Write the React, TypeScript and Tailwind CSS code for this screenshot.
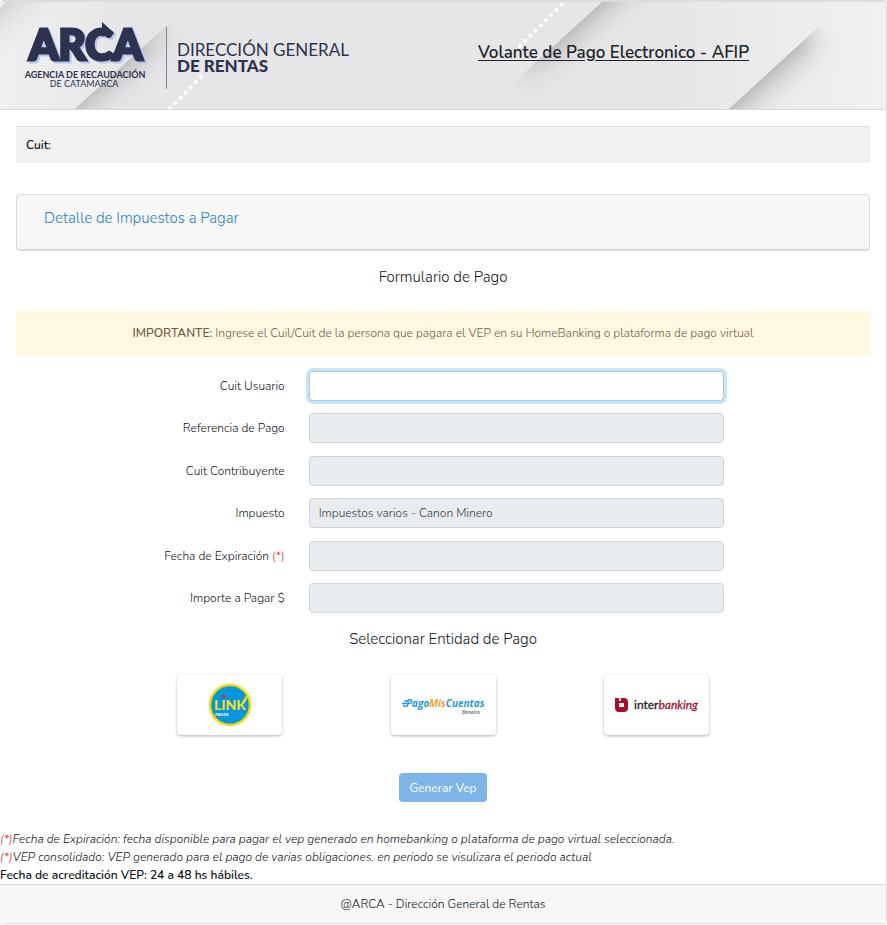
import { FC, ReactNode, useState } from "react";

interface Field {
	id: string;
	label: string;
	value?: string;
	required?: boolean;
	editable?: boolean;
}

const fields: Field[] = [
	{ id: "cuit-usuario", label: "Cuit Usuario", editable: true },
	{ id: "referencia", label: "Referencia de Pago" },
	{ id: "cuit-contribuyente", label: "Cuit Contribuyente" },
	{ id: "impuesto", label: "Impuesto", value: "Impuestos varios - Canon Minero" },
	{ id: "expiracion", label: "Fecha de Expiración", required: true },
	{ id: "importe", label: "Importe a Pagar $" },
];

const HeaderBackground: FC = () => (
	<svg className="absolute inset-0 h-full w-full" viewBox="0 0 886 107" preserveAspectRatio="none" aria-hidden="true">
		<defs>
			<linearGradient id="base" x1="0" x2="1" y1="0" y2="0">
				<stop offset="0" stopColor="#f0f0f0" />
				<stop offset="0.14" stopColor="#e6e6e8" />
				<stop offset="0.75" stopColor="#e6e6e8" />
				<stop offset="1" stopColor="#f1f1f1" />
			</linearGradient>
			<linearGradient id="corner" gradientUnits="userSpaceOnUse" x1="2" y1="0" x2="32" y2="32">
				<stop offset="0" stopColor="#d2d2d2" />
				<stop offset="1" stopColor="#e6e6e8" stopOpacity="0" />
			</linearGradient>
			<linearGradient id="foldLeft" gradientUnits="userSpaceOnUse" x1="118" y1="68" x2="143" y2="96">
				<stop offset="0" stopColor="#c0c0c0" />
				<stop offset="1" stopColor="#e6e6e8" stopOpacity="0" />
			</linearGradient>
			<linearGradient id="foldMiddle" gradientUnits="userSpaceOnUse" x1="567" y1="31" x2="592" y2="59">
				<stop offset="0" stopColor="#bcbcbd" />
				<stop offset="1" stopColor="#e6e6e8" stopOpacity="0" />
			</linearGradient>
			<linearGradient id="foldRight" gradientUnits="userSpaceOnUse" x1="777" y1="63" x2="803" y2="92">
				<stop offset="0" stopColor="#bbbbbc" />
				<stop offset="1" stopColor="#ececec" stopOpacity="0" />
			</linearGradient>
			<linearGradient id="fadeLeft" gradientUnits="userSpaceOnUse" x1="75" y1="107" x2="174" y2="17">
				<stop offset="0.65" stopColor="#fff" />
				<stop offset="1" stopColor="#000" />
			</linearGradient>
			<linearGradient id="fadeMiddle" gradientUnits="userSpaceOnUse" x1="508" y1="86" x2="602" y2="0">
				<stop offset="0" stopColor="#000" />
				<stop offset="0.5" stopColor="#fff" />
			</linearGradient>
			<linearGradient id="fadeRight" gradientUnits="userSpaceOnUse" x1="729" y1="107" x2="827" y2="17">
				<stop offset="0.7" stopColor="#fff" />
				<stop offset="0.95" stopColor="#000" />
			</linearGradient>
			<mask id="maskLeft"><rect x="70" y="0" width="180" height="107" fill="url(#fadeLeft)" /></mask>
			<mask id="maskMiddle"><rect x="500" y="0" width="200" height="107" fill="url(#fadeMiddle)" /></mask>
			<mask id="maskRight"><rect x="720" y="0" width="166" height="107" fill="url(#fadeRight)" /></mask>
		</defs>
		<rect width="886" height="107" fill="url(#base)" />
		<path d="M6 0H66L0 66V6Z" fill="url(#corner)" />
		<path d="M75 107L174 17L240 107Z" fill="url(#foldLeft)" mask="url(#maskLeft)" />
		<path d="M508 86L602 0H690V107H508Z" fill="url(#foldMiddle)" mask="url(#maskMiddle)" />
		<path d="M729 107L827 17L886 107Z" fill="url(#foldRight)" mask="url(#maskRight)" />
		<path d="M170 106L204 72M520 44L562 2" stroke="#fff" strokeWidth="4" strokeLinecap="round" strokeDasharray="0.1 7.2" />
	</svg>
);

const ArcaLogo: FC = () => (
	<svg className="h-[72px] w-[336px] shrink-0 overflow-visible font-normal" viewBox="0 0 336 72" role="img" aria-label="ARCA Dirección General de Rentas">
		<g fill="#2d3250" fontFamily="Lato, sans-serif">
			<g className="drop-shadow-[2px_2px_0_#b7c6ee]">
				<text x="6" y="40" fontSize="42" fontWeight="900" stroke="#2d3250" strokeWidth="3">ARCA</text>
				<path d="M79 2L90 12L79 17Z" />
				<path d="M76 38Q90 40 98 29" fill="none" stroke="#2d3250" strokeWidth="5" />
			</g>
			<text x="62" y="58" fontSize="9" fontWeight="700" textAnchor="middle">AGENCIA DE RECAUDACIÓN</text>
			<text x="61" y="67" fontSize="9" textAnchor="middle">DE CATAMARCA</text>
			<text x="154" y="36" fontSize="17">DIRECCIÓN GENERAL</text>
			<text x="154" y="52" fontSize="17" fontWeight="900">DE RENTAS</text>
		</g>
		<path d="M143.500 7V69" stroke="#82869a" />
	</svg>
);

const LinkLogo: FC = () => (
	<svg className="h-11 w-11" viewBox="0 0 44 44" role="img" aria-label="Link Pagos">
		<circle cx="22" cy="22" r="20" fill="#0795dc" stroke="#f5d90b" strokeWidth="2.500" />
		<path d="M35 20L40 12" stroke="#f5d90b" strokeWidth="2.500" />
		<text x="22" y="27" fill="#f5df20" fontSize="14" fontWeight="900" fontFamily="Lato, sans-serif" textAnchor="middle">LINK</text>
		<circle cx="16" cy="13.500" r="1.700" fill="#dc2440" />
		<text x="7" y="33" fill="#fff" fontSize="4" fontWeight="700" fontFamily="Open Sans, sans-serif">PAGOS</text>
	</svg>
);

const PagoMisCuentasLogo: FC = () => (
	<svg className="h-5 w-[82px] overflow-visible" viewBox="0 0 82 20" role="img" aria-label="Pago Mis Cuentas Banelco">
		<path d="M2 6H6M0 8.500H5M1 11H4" stroke="#229bdd" strokeWidth="1.300" />
		<text x="4" y="12" fontSize="10" fontWeight="700" fontStyle="italic" fontFamily="Open Sans, sans-serif" fill="#229bdd">
			Pago<tspan fill="#f6a12d">Mis</tspan>Cuentas
		</text>
		<text x="60" y="19" fontSize="5" fontWeight="600" fontStyle="italic" fontFamily="Open Sans, sans-serif" fill="#666">Banelco</text>
	</svg>
);

const InterbankingLogo: FC = () => (
	<svg className="h-5 w-[86px] overflow-visible font-normal" viewBox="0 0 86 20" role="img" aria-label="Interbanking">
		<path d="M1 3H5V6H10Q14 6 14 9V13Q14 17 10 17H5Q1 17 1 13Z" fill="#a90d2e" />
		<path d="M7 3H10Q14 3 14 7V10H7Z" fill="#a90d2e" />
		<rect x="5" y="8" width="5" height="4" fill="#fff" />
		<g fontSize="12" fontFamily="Lato, sans-serif" strokeWidth="0.3">
			<text x="20" y="14" fill="#222" stroke="#222">
				inter<tspan fill="#a90d2e" stroke="#a90d2e" fontStyle="italic">banking</tspan>
			</text>
		</g>
	</svg>
);

const entities: { name: string; logo: ReactNode }[] = [
	{ name: "Link Pagos", logo: <LinkLogo /> },
	{ name: "Pago Mis Cuentas", logo: <PagoMisCuentasLogo /> },
	{ name: "Interbanking", logo: <InterbankingLogo /> },
];

const App: FC = () => {
	const [cuit, setCuit] = useState("");

	return (
		<div className="rounded-sm border-t-2 border-r border-b border-[#dcdce0] bg-white font-[Nunito,Lato,sans-serif] text-xs leading-[18px] font-light text-[#111418]">
			<header className="relative flex h-[108px] items-center border-b border-[#d8d8da]">
				<HeaderBackground />
				<div className="relative flex w-1/2 pl-[23px]">
					<ArcaLogo />
				</div>
				<h1 className="relative w-1/2 pr-5 pb-1.5 pl-[35px] text-[17px] font-semibold text-[#212529] underline underline-offset-2">Volante de Pago Electronico - AFIP</h1>
			</header>

			<main className="px-4 pt-4">
				<div className="border-t border-[#dee2e6] bg-[#f1f1f1] px-[10px] py-[9px] font-semibold">Cuit:</div>
				<div className="mt-[31px] h-[57px] rounded-sm border border-b-2 border-[#dadbdc] bg-[#f7f7f7] px-[27px] py-[14px]">
					<a href="#detalle" className="text-[15px] text-[#1f7ed2]">Detalle de Impuestos a Pagar</a>
				</div>
				<h2 className="mt-[17px] text-center text-[15px]">Formulario de Pago</h2>
				<p className="mt-[25px] bg-[#fff8e3] px-4 py-[13px] text-center text-[#6f5c3a]">
					<strong className="font-semibold">IMPORTANTE:</strong> Ingrese el Cuil/Cuit de la persona que pagara el VEP en su HomeBanking o plataforma de pago virtual
				</p>

				<form onSubmit={e => e.preventDefault()}>
					<div className="-mx-3 mt-4 flex h-[242px] flex-col justify-between">
						{fields.map(field => (
							<div key={field.id} className="grid grid-cols-12 items-center">
								<label htmlFor={field.id} className="col-span-4 px-3 text-right">
									{field.label}
									{field.required && <span className="text-[#e3342f]"> (*)</span>}
								</label>
								<div className="col-span-6 flex px-3">
									<input
										id={field.id}
										type="text"
										autoFocus={field.editable}
										readOnly={!field.editable}
										value={field.editable ? cuit : (field.value ?? "")}
										onChange={e => setCuit(e.target.value)}
										className="h-[30px] w-full rounded-sm border border-[#ced4da] bg-white px-[9px] text-[#34393e] outline-none read-only:bg-[#e9ecef] focus:border-[#a1cbef] focus:ring-3 focus:ring-[#cce3f6]"
									/>
								</div>
							</div>
						))}
					</div>

					<h2 className="mt-[17px] text-center text-[15px]">Seleccionar Entidad de Pago</h2>
					<div className="mx-auto mt-[27px] grid w-3/4 grid-cols-3 justify-items-center">
						{entities.map(entity => (
							<button
								key={entity.name}
								type="button"
								aria-label={entity.name}
								className="flex h-[60px] w-[105px] items-center justify-center rounded-sm bg-white shadow-[0_1px_3px_rgba(0,0,0,0.3)]"
							>
								{entity.logo}
							</button>
						))}
					</div>
					<div className="mt-[38px] flex justify-center">
						<button type="submit" className="h-[29px] rounded-sm bg-[#7db5e8] px-[10px] font-normal text-white">Generar Vep</button>
					</div>
				</form>
			</main>

			<div className="mt-7">
				<p className="italic"><span className="text-[#e3342f]">(*)</span>Fecha de Expiración: fecha disponible para pagar el vep generado en homebanking o plataforma de pago virtual seleccionada.</p>
				<p className="italic"><span className="text-[#e3342f]">(*)</span>VEP consolidado: VEP generado para el pago de varias obligaciones. en periodo se visulizara el periodo actual</p>
				<p className="font-semibold">Fecha de acreditación VEP: 24 a 48 hs hábiles.</p>
			</div>
			<footer className="border-t border-[#d8d8da] bg-[#f7f7f7] py-[10px] text-center">@ARCA - Dirección General de Rentas</footer>
		</div>
	);
};

export default App;
